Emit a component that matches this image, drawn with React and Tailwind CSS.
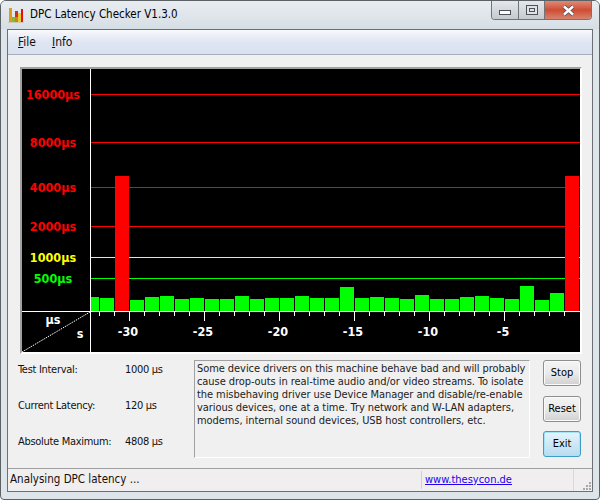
import React from 'react';

const labels = [
  { text: '16000µs', y: 94, line: '#ff0000' },
  { text: '8000µs', y: 142, line: '#ff0000' },
  { text: '4000µs', y: 187, line: '#ff0000' },
  { text: '2000µs', y: 226, line: '#ff0000' },
  { text: '1000µs', y: 257, line: '#ffff00' },
  { text: '500µs', y: 278, line: '#00ff00' },
];

// top of each bar, one bar per 15px, the last one is the red peak
const barTops = [
  298, 176, 300, 297, 296, 299, 298, 299, 299, 296, 299, 298, 298, 296, 298, 298,
  287, 298, 297, 298, 299, 295, 299, 299, 297, 296, 298, 299, 286, 300, 293, 176,
];

const ticks = Array.from({ length: 32 }, (_, i) => 99 + i * 15);
const seconds = [-30, -25, -20, -15, -10, -5];

const Chart = () => (
  <svg width="558" height="283" viewBox="22 69 558 283" className="block shrink-0 bg-black" fontFamily="'DejaVu Sans Condensed', 'DejaVu Sans', sans-serif" fontWeight="700" fontSize="12.5">
    <g shapeRendering="crispEdges">
      {labels.map((l) => (
        <rect key={l.text} x="91" y={l.y} width="489" height="1" fill={l.line} />
      ))}
      <rect x="91" y="297" width="8" height="14" fill="#00ff00" />
      {barTops.map((top, i) => (
        <rect key={i} x={100 + i * 15} y={top} width="14" height={311 - top} fill={top < 200 ? '#ff0000' : '#00ff00'} />
      ))}
      <rect x="90" y="69" width="1" height="283" fill="#fff" />
      <rect x="22" y="311" width="558" height="1" fill="#fff" />
      {ticks.map((x) => (
        <rect key={x} x={x} y="312" width="1" height={(x - 129) % 75 === 0 ? 9 : 4} fill="#fff" />
      ))}
    </g>
    {labels.map((l) => (
      <text key={l.text} x="53" y={l.y + 5} textAnchor="middle" fill={l.line}>{l.text}</text>
    ))}
    {seconds.map((s, i) => (
      <text key={s} x={128 + i * 75} y="336" textAnchor="middle" fill="#fff">{s}</text>
    ))}
    <text x="53" y="324" textAnchor="middle" fill="#fff">µs</text>
    <text x="80" y="338" textAnchor="middle" fill="#fff">s</text>
    <line x1="22" y1="352" x2="90" y2="312" stroke="#fff" strokeDasharray="1.5 1" />
  </svg>
);

const AppIcon = () => (
  <svg width="16" height="16" viewBox="0 0 16 16" className="ml-[7px] mr-[6px]" shapeRendering="crispEdges">
    <rect x="0" y="15" width="16" height="1" fill="#cfc7b8" />
    <rect x="1" y="1" width="3" height="14" fill="#e09a1e" />
    <rect x="4" y="10" width="3" height="5" fill="#8cb82a" />
    <rect x="7" y="4" width="3" height="11" fill="#c8302a" />
    <rect x="7" y="10" width="3" height="5" fill="#c9802c" />
    <rect x="10" y="6" width="3" height="9" fill="#e8d020" />
    <rect x="13" y="2" width="2" height="13" fill="#e01010" />
  </svg>
);

const Stat = ({ label, value }) => (
  <div className="flex items-center h-[13px] tracking-[-0.3px]">
    <span className="w-[107px]">{label}</span>
    <span>{value}</span>
  </div>
);

const Button = ({ children, active, className = '' }) => (
  <button
    className={`w-[38px] h-[26px] rounded-[3px] border text-black ${className} ${
      active
        ? 'border-[#3c9ec8] bg-gradient-to-b from-[#e6f4fb] to-[#b7dcef] shadow-[inset_0_0_0_1px_#a6e2f8]'
        : 'border-[#8e8e8e] bg-gradient-to-b from-[#f4f4f4] via-[#ebebeb] to-[#d0d0d0] shadow-[inset_0_0_0_1px_#fbfbfb]'
    }`}
  >
    {children}
  </button>
);

export default function App() {
  return (
    <div className="w-[600px] h-[500px] flex flex-col bg-[#dde4ea] border border-[#5c6166] rounded-t-[6px] rounded-b-[4px] font-['DejaVu_Sans_Condensed','DejaVu_Sans',sans-serif] text-[11px] text-[#111] overflow-hidden">
      {/* title bar */}
      <div className="h-[28px] flex shrink-0 bg-gradient-to-b from-[#e8edf1] to-[#d6dee5]">
        <div className="flex items-center text-black">
          <AppIcon />
          <span className="text-[11.5px]">DPC Latency Checker V1.3.0</span>
        </div>
        <div className="ml-auto mr-[7px] h-[19px] flex border border-t-0 border-[#6f7478] rounded-b-[4px] overflow-hidden">
          <div className="w-[27px] flex items-center justify-center border-r border-[#6f7478] bg-gradient-to-b from-[#e4e8ec] to-[#c4cacf]">
            <div className="w-[12px] h-[5px] mt-[5px] bg-white border border-[#4c5358]"></div>
          </div>
          <div className="w-[26px] flex items-center justify-center border-r border-[#6f7478] bg-gradient-to-b from-[#e4e8ec] to-[#c4cacf]">
            <div className="w-[12px] h-[10px] border border-[#4c5358] bg-[#dfe3e6] flex items-center justify-center">
              <div className="w-[6px] h-[4px] border border-[#4c5358]"></div>
            </div>
          </div>
          <div className="w-[46px] flex items-center justify-center bg-gradient-to-b from-[#dd8a76] via-[#cf4c33] to-[#d5826c]">
            <svg width="13" height="11" viewBox="0 0 13 11">
              <path d="M2 1.5 L11 9.5 M11 1.5 L2 9.5" stroke="#4a4f55" strokeWidth="4" />
              <path d="M2 1.5 L11 9.5 M11 1.5 L2 9.5" stroke="#fff" strokeWidth="2.4" />
            </svg>
          </div>
        </div>
      </div>

      {/* client area */}
      <div className="mx-[6px] flex-1 flex flex-col border border-[#6c7075] bg-[#f0f0f0]">
        <div className="h-[25px] shrink-0 flex items-center gap-[16px] pl-[10px] text-[12px] border-b border-[#a9adb8] bg-gradient-to-b from-[#f8f9fb] via-[#dfe5f2] to-[#d9e0f0]">
          <span><span className="underline">F</span>ile</span>
          <span><span className="underline">I</span>nfo</span>
        </div>

        <div className="flex-1 flex flex-col pt-[12px] pl-[12px]">
          <div className="w-[562px] shrink-0 border-2 border-[#a0a0a0] border-r-white border-b-white">
            <Chart />
          </div>

          <div className="flex mt-[6px]">
            <div className="w-[175px] flex flex-col gap-[23px] pt-[4px] -ml-[2px]">
              <Stat label="Test Interval:" value="1000 µs" />
              <Stat label="Current Latency:" value="120 µs" />
              <Stat label="Absolute Maximum:" value="4808 µs" />
            </div>
            <div className="w-[336px] h-[98px] ml-[1px] px-[2px] pt-[1px] border border-[#a0a0a0] border-r-white border-b-white leading-[13px] tracking-[-0.07px] text-[#222]">
              Some device drivers on this machine behave bad and will probably cause drop-outs in real-time audio and/or video streams. To isolate the misbehaving driver use Device Manager and disable/re-enable various devices, one at a time. Try network and W-LAN adapters, modems, internal sound devices, USB host controllers, etc.
            </div>
            <div className="ml-[13px] flex flex-col gap-[9px]">
              <Button>Stop</Button>
              <Button className="mt-[1px]">Reset</Button>
              <Button active>Exit</Button>
            </div>
          </div>
        </div>

        <div className="h-[23px] shrink-0 flex items-center border-t border-[#a0a0a0] bg-[#f0eeee]">
          <span className="w-[414px] pl-[2px] text-[11.5px] border-r border-[#d0d0d0]">Analysing DPC latency ...</span>
          <a href="#" className="ml-[3px] text-[#2200ee] underline">www.thesycon.de</a>
          <div className="ml-auto w-[19px] h-full border-l border-[#d8d8d8] flex items-end justify-end">
            <svg width="10" height="10" viewBox="0 0 10 10" fill="#a8a8a8">
              <rect x="7" y="1" width="2" height="2" />
              <rect x="4" y="4" width="2" height="2" />
              <rect x="7" y="4" width="2" height="2" />
              <rect x="1" y="7" width="2" height="2" />
              <rect x="4" y="7" width="2" height="2" />
              <rect x="7" y="7" width="2" height="2" />
            </svg>
          </div>
        </div>
      </div>
      <div className="h-[7px] shrink-0"></div>
    </div>
  );
}
